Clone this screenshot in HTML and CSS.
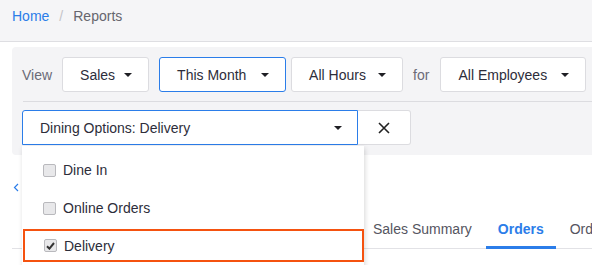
FILE: index.html
```html
<!DOCTYPE html>
<html lang="en">
<head>
<meta charset="utf-8">
<title>Reports</title>
<link rel="stylesheet" href="styles.css">
</head>
<body>
<div class="page">
  <nav class="crumbs">
    <a class="crumb-link" href="#">Home</a>
    <span class="crumb-sep">/</span>
    <span class="crumb-current">Reports</span>
  </nav>

  <section class="filters">
    <div class="filter-row">
      <span class="filter-label">View</span>
      <button class="select select-sales"><span>Sales</span><i class="caret"></i></button>
      <button class="select select-month is-active"><span>This Month</span><i class="caret"></i></button>
      <button class="select select-hours"><span>All Hours</span><i class="caret"></i></button>
      <span class="filter-label">for</span>
      <button class="select select-employees"><span>All Employees</span><i class="caret"></i></button>
    </div>
    <div class="divider"></div>
    <div class="filter-row">
      <div class="combo">
        <button class="select select-dining is-active"><span>Dining Options: Delivery</span><i class="caret"></i></button>
        <button class="clear" aria-label="Clear">
          <svg width="12" height="12" viewBox="0 0 12 12"><path d="M1 1 L11 11 M11 1 L1 11" stroke="#222" stroke-width="1.6" fill="none"/></svg>
        </button>
        <div class="menu">
          <label class="menu-item"><span class="check"></span>Dine In</label>
          <label class="menu-item"><span class="check"></span>Online Orders</label>
          <label class="menu-item is-highlighted"><span class="check is-checked"><svg width="9" height="8" viewBox="0 0 9 8"><path d="M1 4.2 L3.4 6.6 L8 1" stroke="#333" stroke-width="2" fill="none"/></svg></span>Delivery</label>
        </div>
      </div>
    </div>
  </section>

  <div class="report">
    <a class="back" href="#"><svg width="6" height="9" viewBox="0 0 6 9"><path d="M5 1 L1.5 4.5 L5 8" stroke="#2b7de9" stroke-width="1.2" fill="none"/></svg></a>
    <div class="tabs">
      <span class="tab">Sales Summary</span>
      <span class="tab is-active">Orders</span>
      <span class="tab">Order Details</span>
    </div>
  </div>
</div>
</body>
</html>
```
FILE: styles.css
```css
html, body {
  margin: 0;
  padding: 0;
  overflow: hidden;
  background: #ffffff;
}
body {
  font-family: "Liberation Sans", Arial, sans-serif;
  font-size: 14px;
  color: #333340;
}
.page {
  width: 592px;
  height: 265px;
  overflow: hidden;
}

/* breadcrumb */
.crumbs {
  box-sizing: border-box;
  height: 42px;
  padding: 7px 12px 0;
  line-height: 18px;
  background: #f5f5f7;
  border-bottom: 1px solid #dedee2;
  display: flex;
}
.crumb-link {
  color: #2b7de9;
  text-decoration: none;
}
.crumb-sep {
  color: #c4c4c8;
  margin: 0 10px;
}
.crumb-current {
  color: #66666e;
}

/* filter panel */
.filters {
  margin: 5px -30px 0 12px;
  padding: 10px;
  background: #f4f4f6;
  border-radius: 4px 0 0 4px;
}
.filter-row {
  display: flex;
  align-items: center;
  gap: 10px;
  height: 35px;
}
.filter-label {
  color: #6b6b78;
  padding-top: 1px;
}
.filter-label + .select-employees {
  margin-left: 1px;
}
.select {
  box-sizing: border-box;
  height: 35px;
  display: flex;
  align-items: center;
  justify-content: space-between;
  padding: 1px 16px 0 17px;
  background: #ffffff;
  border: 1px solid #dcdce0;
  border-radius: 3px;
  font: inherit;
  color: #2d2d3a;
  cursor: pointer;
}
.select.is-active {
  border-color: #2b7de9;
}
.select-sales { width: 87px; }
.select-month { width: 127px; }
.select-hours { width: 112px; margin-left: -5px; }
.select-employees { width: 146px; }
.select-dining {
  width: 336px;
  border-radius: 3px 0 0 0;
  padding-right: 15px;
}
.caret {
  width: 0;
  height: 0;
  border-left: 4px solid transparent;
  border-right: 4px solid transparent;
  border-top: 4px solid #1f1f24;
}
.divider {
  height: 1px;
  background: #dcdce0;
  margin: 9px 0 8px 1px;
}

/* combo with menu */
.combo {
  position: relative;
  display: flex;
}
.clear {
  box-sizing: border-box;
  width: 53px;
  height: 35px;
  display: flex;
  align-items: center;
  justify-content: center;
  background: #ffffff;
  border: 1px solid #dcdce0;
  border-left: none;
  border-radius: 0 3px 3px 0;
  padding: 0;
  cursor: pointer;
}
.menu {
  position: absolute;
  top: 36px;
  left: 0;
  width: 342px;
  padding: 5px 0 8px;
  background: #ffffff;
  box-shadow: 1px 2px 5px rgba(0, 0, 0, 0.16);
  z-index: 5;
}
.menu-item {
  box-sizing: border-box;
  height: 38px;
  display: flex;
  align-items: center;
  padding-left: 21px;
  color: #2d2d3a;
}
.menu-item.is-highlighted {
  height: 33px;
  margin: 2px 0 0 1px;
  padding-left: 19px;
  border: 2px solid #f5520f;
}
.check {
  box-sizing: border-box;
  width: 13px;
  height: 13px;
  margin-right: 7px;
  background: #e8e8ea;
  border: 1px solid #b9b9bd;
  border-radius: 2px;
  display: flex;
  align-items: center;
  justify-content: center;
}

/* report area */
.report {
  margin: 0 0 0 12px;
}
.back {
  display: flex;
  height: 12px;
  margin: 26px 0 0 1px;
  align-items: center;
}
.tabs {
  display: flex;
  gap: 2px;
  margin-top: 16px;
  padding-left: 349px;
  border-bottom: 1px solid #e2e2e6;
  height: 39px;
  white-space: nowrap;
}
.tab {
  box-sizing: border-box;
  height: 40px;
  padding: 11px 12px 8px;
  line-height: 18px;
  color: #55555f;
  border-bottom: 3px solid transparent;
}
.tab.is-active {
  color: #2b7de9;
  font-weight: bold;
  border-bottom-color: #2b7de9;
}
```
